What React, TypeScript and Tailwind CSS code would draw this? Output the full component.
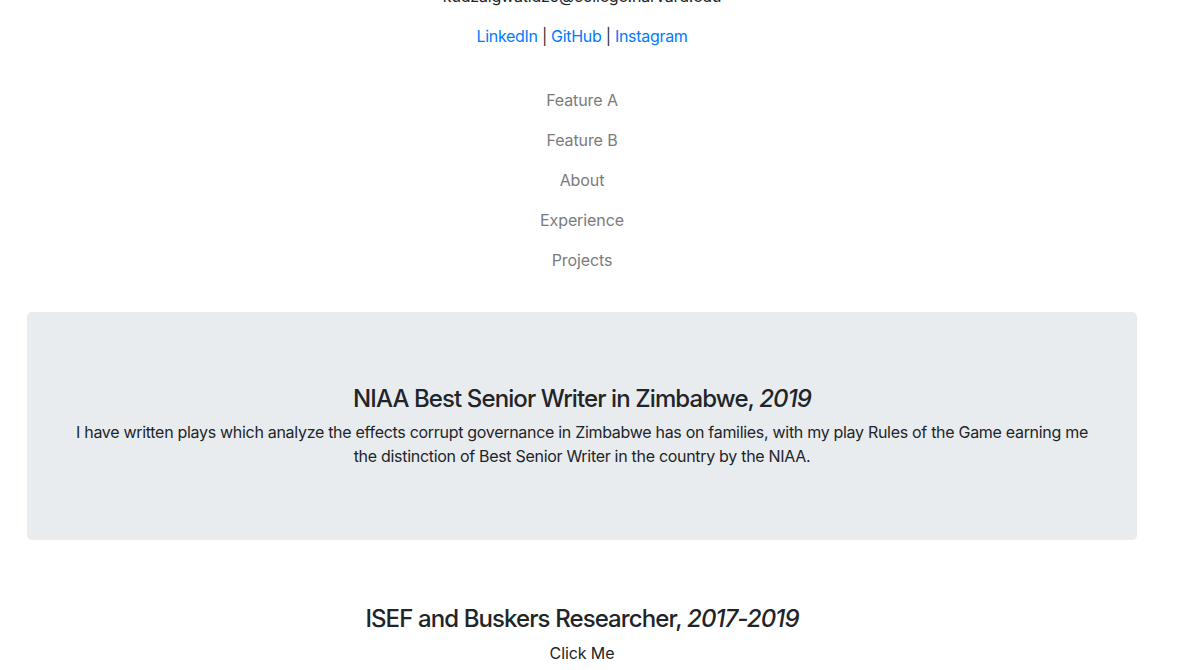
const links = ["LinkedIn", "GitHub", "Instagram"];
const navItems = ["Feature A", "Feature B", "About", "Experience", "Projects"];

export default function App() {
  return (
    <main
      className="w-[1164px] bg-white text-[16px] leading-6 text-[#212529] text-center overflow-hidden"
      style={{ fontFamily: "Inter, 'Noto Sans', sans-serif" }}
    >
      <p className="-mt-[16px] mb-4 tracking-[-0.2px]">kudzaigwatidzo@college.harvard.edu</p>
      <p className="tracking-[-0.3px]">
        {links.map((name, i) => (
          <span key={name}>
            <a href="#" className="text-[#007bff] hover:underline">
              {name}
            </a>
            {i < links.length - 1 && <span className="text-[#333]"> | </span>}
          </span>
        ))}
      </p>

      <nav className="mt-8 flex flex-col items-center">
        {navItems.map((item) => (
          <a key={item} href="#" className="py-2 text-[#7b7b7b] tracking-[-0.1px]">
            {item}
          </a>
        ))}
      </nav>

      <section className="mx-auto mt-8 w-[1110px] rounded-[5px] bg-[#e9ecef] px-[40px] py-[72px]">
        <h4 className="mb-[7px] text-[24px] leading-[29px] font-medium tracking-[-0.9px]">
          NIAA Best Senior Writer in Zimbabwe, <em>2019</em>
        </h4>
        <p className="tracking-[-0.3px]">
          I have written plays which analyze the effects corrupt governance in Zimbabwe has on
          families, with my play Rules of the Game earning me the distinction of Best Senior
          Writer in the country by the NIAA.
        </p>
      </section>

      <section className="mx-auto w-[1110px] px-8 py-16">
        <h4 className="mb-2 text-[24px] leading-[29px] font-medium tracking-[-0.9px]">
          ISEF and Buskers Researcher, <em>2017-2019</em>
        </h4>
        <button type="button" className="text-[#212529] tracking-[-0.1px]">
          Click Me
        </button>
      </section>
    </main>
  );
}
